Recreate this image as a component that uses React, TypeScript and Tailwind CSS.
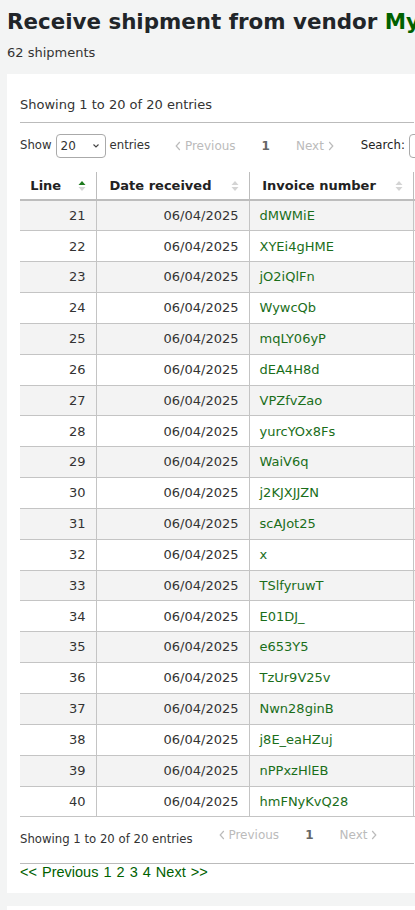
import React from "react";

const rows: [number, string][] = [
  [21, "dMWMiE"],
  [22, "XYEi4gHME"],
  [23, "jO2iQlFn"],
  [24, "WywcQb"],
  [25, "mqLY06yP"],
  [26, "dEA4H8d"],
  [27, "VPZfvZao"],
  [28, "yurcYOx8Fs"],
  [29, "WaiV6q"],
  [30, "j2KJXJJZN"],
  [31, "scAJot25"],
  [32, "x"],
  [33, "TSlfyruwT"],
  [34, "E01DJ_"],
  [35, "e653Y5"],
  [36, "TzUr9V25v"],
  [37, "Nwn28ginB"],
  [38, "j8E_eaHZuj"],
  [39, "nPPxzHlEB"],
  [40, "hmFNyKvQ28"],
];

function SortIcon({ active }: { active?: boolean }) {
  return (
    <svg width="8" height="12" viewBox="0 0 8 12" className="absolute right-[10px] top-1/2 -translate-y-1/2">
      <path d="M0.5 5 L4 1 L7.5 5 Z" fill={active ? "#1d7a1d" : "#d4d4d4"} />
      <path d="M0.5 7 L4 11 L7.5 7 Z" fill="#d4d4d4" />
    </svg>
  );
}

function Chevron({ dir }: { dir: "left" | "right" }) {
  return (
    <svg width="6" height="10" viewBox="0 0 6 10" className="inline-block align-[-1px]">
      <path
        d={dir === "left" ? "M4.8 1 L1.2 5 L4.8 9" : "M1.2 1 L4.8 5 L1.2 9"}
        stroke="#bbb"
        strokeWidth="1.2"
        fill="none"
      />
    </svg>
  );
}

function Pager() {
  return (
    <div className="flex items-center text-[12px] leading-[18px]">
      <span className="px-[13px] text-[#bbb]">
        <Chevron dir="left" /> Previous
      </span>
      <span className="px-[13px] font-bold text-[#666]">1</span>
      <span className="px-[13px] text-[#bbb]">
        Next <Chevron dir="right" />
      </span>
    </div>
  );
}

export default function App() {
  return (
    <div className="min-h-[910px] w-[415px] overflow-hidden bg-[#f3f4f4] font-['DejaVu_Sans',sans-serif] text-[#333]">
      <h1 className="ml-[7px] mt-[9px] whitespace-nowrap text-[21.4px] font-bold leading-[26px] text-[#212529]">
        Receive shipment from vendor <a className="text-[#006100]">My Vendor</a>
      </h1>
      <p className="ml-[7px] mt-[9px] text-[13px] leading-[18px]">62 shipments</p>

      <div className="ml-[7px] mt-[12px] w-[700px] bg-white pl-[13px] pb-[13px] pt-[22px]">
        <p className="text-[13px] leading-[18px]">Showing 1 to 20 of 20 entries</p>
        <div className="mt-[8px] w-[394px] border-t border-[#bbb]" />

        <div className="mt-[11px] flex h-[24px] items-center whitespace-nowrap text-[11.7px]">
          <span>Show</span>
          <div className="ml-[4px] flex h-[24px] w-[50px] items-center justify-between rounded-[4px] border border-[#aaa] pl-[4px] pr-[5px] text-[12px]">
            <span>20</span>
            <svg width="8" height="6" viewBox="0 0 8 6">
              <path d="M1.5 1.5 L4 4 L6.5 1.5" stroke="#444" strokeWidth="1.1" fill="none" />
            </svg>
          </div>
          <span className="ml-[4px]">entries</span>
          <div className="ml-[12px]">
            <Pager />
          </div>
          <span className="ml-[14px] text-[#222]">Search:</span>
          <div className="ml-[4px] h-[24px] w-[150px] rounded-[4px] border border-[#aaa]" />
        </div>

        <table className="mt-[14px] w-[600px] border-collapse text-[13px]">
          <thead>
            <tr className="h-[28px]">
              <th className="relative w-[76px] border-b-2 border-r border-[#bdbdbd] pl-[6px] pr-[30px] text-center font-bold text-[#222]">
                Line
                <SortIcon active />
              </th>
              <th className="relative w-[153px] border-b-2 border-r border-[#bdbdbd] pl-[6px] pr-[30px] text-center font-bold text-[#222]">
                Date received
                <SortIcon />
              </th>
              <th className="relative w-[164px] border-b-2 border-r border-[#bdbdbd] pl-[6px] pr-[30px] text-center font-bold text-[#222]">
                Invoice number
                <SortIcon />
              </th>
              <th className="relative border-b-2 border-[#bdbdbd] pl-[6px] pr-[30px] text-center font-bold text-[#222]">
                Actions
              </th>
            </tr>
          </thead>
          <tbody>
            {rows.map(([n, inv], i) => (
              <tr key={n} className={`h-[30.85px] ${i % 2 === 0 ? "bg-[#f3f3f3]" : "bg-white"}`}>
                <td className="border-b border-r border-[#c4c4c4] pr-[10px] text-right">{n}</td>
                <td className="border-b border-r border-[#c4c4c4] pr-[10px] text-right">06/04/2025</td>
                <td className="border-b border-r border-[#c4c4c4] pl-[10px] text-[#1a6e1a]">{inv}</td>
                <td className="border-b border-[#c4c4c4]" />
              </tr>
            ))}
          </tbody>
        </table>

        <div className="mt-[12px] flex items-start whitespace-nowrap text-[11.7px] leading-[18px]">
          <span className="mt-[1px]">Showing 1 to 20 of 20 entries</span>
          <div className="-mt-[3px] ml-[13px]">
            <Pager />
          </div>
        </div>
        <div className="mt-[15px] w-[394px] border-t border-[#bbb]" />
        <div className="font-['Liberation_Sans',Arial,sans-serif] text-[14.5px] leading-[16px] text-[#006100] [word-spacing:1px]">
          <a>&lt;&lt; Previous</a> <a>1</a> <a>2</a> <a>3</a> <a>4</a> <a>Next &gt;&gt;</a>
        </div>
      </div>

      <div className="ml-[7px] mt-[13px] h-[20px] w-[700px] bg-white" />
    </div>
  );
}
